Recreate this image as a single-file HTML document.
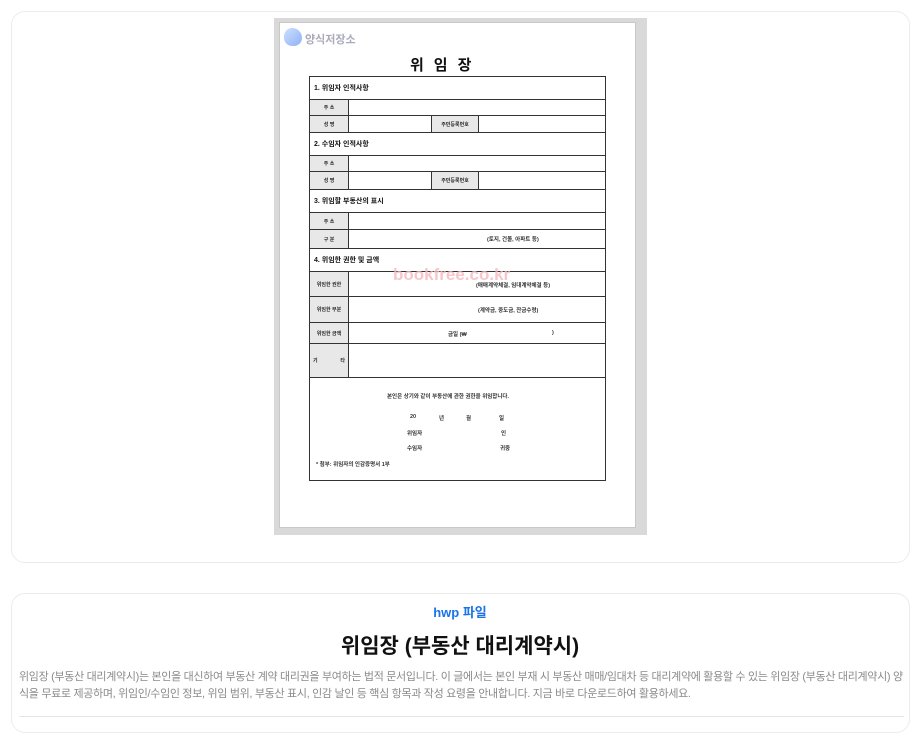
<!DOCTYPE html>
<html><head><meta charset="utf-8"><style>
*{margin:0;padding:0;box-sizing:border-box}
body{width:920px;height:718px;background:#fff;font-family:"Liberation Sans","Noto Sans CJK KR",sans-serif;position:relative;overflow:hidden}
.card{position:absolute;left:11px;width:899px;border:1px solid #ececec;border-radius:14px;background:#fff}
.a{position:absolute}
.ln{position:absolute;background:#333}
.lbl{position:absolute;background:#e8e8e8;left:310px;width:38px;font-size:5px;display:flex;align-items:center;justify-content:center;font-weight:bold;color:#222}
.sec{position:absolute;left:314px;font-size:7px;font-weight:bold;color:#111}
.t{position:absolute;font-size:5.5px;color:#333;white-space:nowrap;font-weight:bold}
</style></head><body>
<div class="card" style="top:11px;height:552px"></div>
<div class="a" style="left:274px;top:18px;width:373px;height:517px;background:#d9d9d9"></div>
<div class="a" style="left:279px;top:22px;width:357px;height:506px;background:#fff;border:1px solid #c8c8c8"></div>
<div class="a" style="left:284px;top:28px;width:18px;height:18px;border-radius:50% 60% 50% 50%;background:linear-gradient(135deg,#cfe0ff,#8fb0f5)"></div>
<div class="a" style="left:305px;top:31px;font-size:11px;color:#aab;font-weight:bold">양식저장소</div>
<div class="a" style="left:410px;top:54px;font-size:15px;font-weight:bold;letter-spacing:10px;color:#111">위임장</div>
<div class="a" style="left:309px;top:76px;width:297px;height:405px;border:1px solid #333"></div>
<div class="lbl" style="top:100px;height:15px">주 소</div>
<div class="lbl" style="top:116px;height:16px">성 명</div>
<div class="lbl" style="top:156px;height:15px">주 소</div>
<div class="lbl" style="top:172px;height:17px">성 명</div>
<div class="lbl" style="top:213px;height:16px">주 소</div>
<div class="lbl" style="top:230px;height:18px">구 분</div>
<div class="lbl" style="top:272px;height:24px">위임한 권한</div>
<div class="lbl" style="top:297px;height:25px">위임한 부분</div>
<div class="lbl" style="top:323px;height:20px">위임한 금액</div>
<div class="lbl" style="top:344px;height:33px;justify-content:space-between;padding:0 3px">기<span>타</span></div>
<div class="lbl" style="left:432px;top:116px;width:46px;height:16px">주민등록번호</div>
<div class="lbl" style="left:432px;top:172px;width:46px;height:17px">주민등록번호</div>
<div class="ln" style="left:309px;width:297px;top:99px;height:1px"></div>
<div class="ln" style="left:309px;width:297px;top:115px;height:1px"></div>
<div class="ln" style="left:309px;width:297px;top:132px;height:1px"></div>
<div class="ln" style="left:309px;width:297px;top:155px;height:1px"></div>
<div class="ln" style="left:309px;width:297px;top:171px;height:1px"></div>
<div class="ln" style="left:309px;width:297px;top:189px;height:1px"></div>
<div class="ln" style="left:309px;width:297px;top:212px;height:1px"></div>
<div class="ln" style="left:309px;width:297px;top:229px;height:1px"></div>
<div class="ln" style="left:309px;width:297px;top:248px;height:1px"></div>
<div class="ln" style="left:309px;width:297px;top:271px;height:1px"></div>
<div class="ln" style="left:309px;width:297px;top:296px;height:1px"></div>
<div class="ln" style="left:309px;width:297px;top:322px;height:1px"></div>
<div class="ln" style="left:309px;width:297px;top:343px;height:1px"></div>
<div class="ln" style="left:309px;width:297px;top:377px;height:1px"></div>
<div class="ln" style="left:348px;top:99px;width:1px;height:33px"></div>
<div class="ln" style="left:348px;top:155px;width:1px;height:34px"></div>
<div class="ln" style="left:348px;top:212px;width:1px;height:36px"></div>
<div class="ln" style="left:348px;top:271px;width:1px;height:106px"></div>
<div class="ln" style="left:431px;top:115px;width:1px;height:17px"></div>
<div class="ln" style="left:478px;top:115px;width:1px;height:17px"></div>
<div class="ln" style="left:431px;top:171px;width:1px;height:18px"></div>
<div class="ln" style="left:478px;top:171px;width:1px;height:18px"></div>
<div class="sec" style="top:83px">1. 위임자 인적사항</div>
<div class="sec" style="top:139px">2. 수임자 인적사항</div>
<div class="sec" style="top:196px">3. 위임할 부동산의 표시</div>
<div class="sec" style="top:255px">4. 위임한 권한 및 금액</div>
<div class="t" style="left:487px;top:235px">(토지, 건물, 아파트 등)</div>
<div class="t" style="left:476px;top:281px">(매매계약체결, 임대계약체결 등)</div>
<div class="t" style="left:478px;top:306px">(계약금, 중도금, 잔금수령)</div>
<div class="t" style="left:448px;top:330px">금일 (₩</div>
<div class="t" style="left:552px;top:330px">)</div>
<div class="a" style="left:393px;top:265px;font-size:17px;color:#f4b8bd;font-weight:bold;opacity:.8">bookfree.co.kr</div>
<div class="t" style="left:387px;top:392px">본인은 상기와 같이 부동산에 관한 권한을 위임합니다.</div>
<div class="t" style="left:410px;top:414px">20</div>
<div class="t" style="left:439px;top:414px">년</div>
<div class="t" style="left:466px;top:414px">월</div>
<div class="t" style="left:499px;top:414px">일</div>
<div class="t" style="left:407px;top:429px">위임자</div>
<div class="t" style="left:501px;top:429px">인</div>
<div class="t" style="left:407px;top:444px">수임자</div>
<div class="t" style="left:500px;top:444px">귀중</div>
<div class="t" style="left:316px;top:460px">* 첨부: 위임자의 인감증명서 1부</div>

<div class="card" style="top:593px;height:140px"></div>
<div class="a" style="left:0;width:920px;top:602px;text-align:center;font-size:13px;font-weight:bold;color:#1a73e8">hwp 파일</div>
<div class="a" style="left:0;width:920px;top:630px;text-align:center;font-size:21px;font-weight:bold;color:#111">위임장 (부동산 대리계약시)</div>
<div class="a" style="left:19px;width:888px;top:669px;font-size:11px;letter-spacing:-0.32px;line-height:17px;color:#8a8a8a;word-break:break-all">위임장 (부동산 대리계약시)는 본인을 대신하여 부동산 계약 대리권을 부여하는 법적 문서입니다. 이 글에서는 본인 부재 시 부동산 매매/임대차 등 대리계약에 활용할 수 있는 위임장 (부동산 대리계약시) 양식을 무료로 제공하며, 위임인/수임인 정보, 위임 범위, 부동산 표시, 인감 날인 등 핵심 항목과 작성 요령을 안내합니다. 지금 바로 다운로드하여 활용하세요.</div>
<div class="a" style="left:19px;width:885px;top:716px;height:1px;background:#e5e5e5"></div>
</body></html>
